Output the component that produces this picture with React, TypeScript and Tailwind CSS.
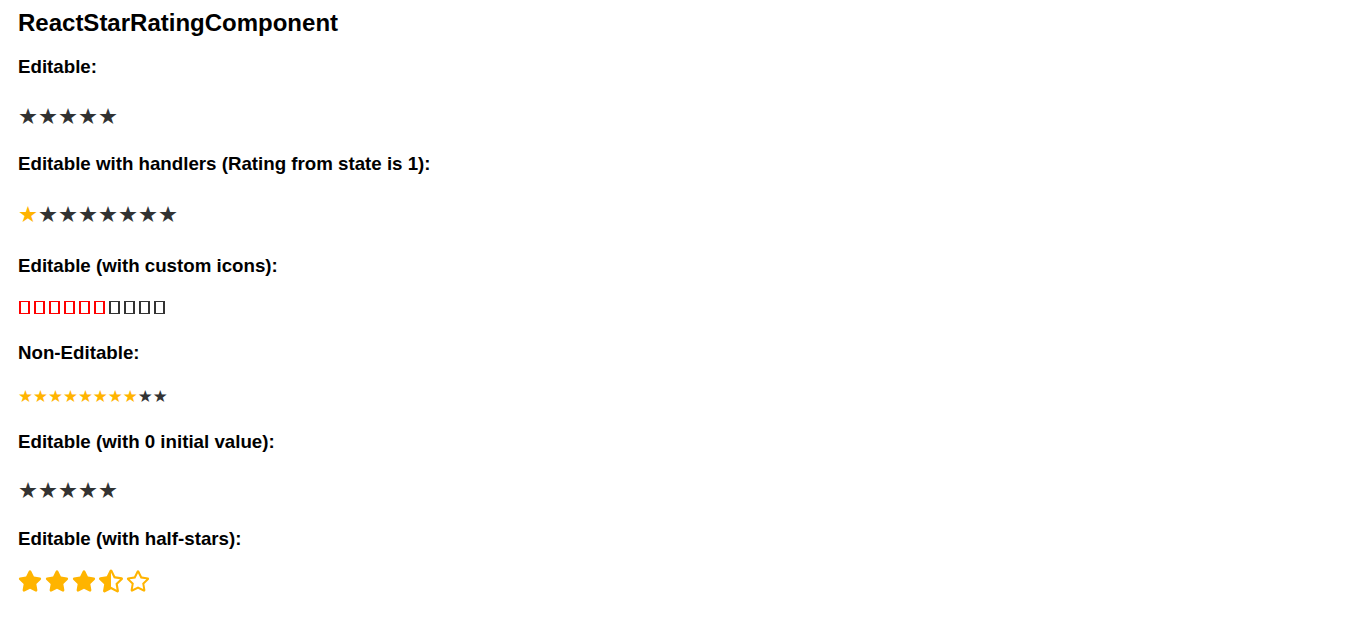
import { FaStar, FaStarHalfAlt, FaRegStar } from "react-icons/fa";

const ARIAL = "font-['Liberation_Sans',Arial,sans-serif]";

function Label({ children, className }: { children: string; className?: string }) {
  return (
    <h3 className={`flex h-[22px] items-center text-[18.72px] font-bold leading-[22px] text-black ${className ?? ""}`}>
      {children}
    </h3>
  );
}

function TextStars({ count, value, className }: { count: number; value: number; className?: string }) {
  return (
    <div className={`flex h-6 items-center font-['DejaVu_Sans',sans-serif] ${className ?? ""}`}>
      {Array.from({ length: count }).map((_, i) => (
        <span key={i} className={i < value ? "text-[#ffb400]" : "text-[#333333]"}>
          ★
        </span>
      ))}
    </div>
  );
}

// custom icons failed to load in the original, so they show as empty boxes
function TofuRow() {
  return (
    <div className="mt-[18px] ml-px flex h-6 items-center gap-1">
      {Array.from({ length: 10 }).map((_, i) => (
        <span
          key={i}
          className={`inline-block h-[13px] w-[11px] border-x-2 border-y ${
            i < 6 ? "border-[#ff0000]" : "border-[#333333]"
          }`}
        />
      ))}
    </div>
  );
}

function HalfStars() {
  return (
    <div className="mt-[19px] flex h-6 items-center gap-[3px] text-[#ffb400]">
      <FaStar size={24} />
      <FaStar size={24} />
      <FaStar size={24} />
      <FaStarHalfAlt size={24} />
      <FaRegStar size={24} />
    </div>
  );
}

export default function App() {
  return (
    <div className={`min-h-screen bg-white pl-[18px] ${ARIAL}`}>
      <h2 className="pt-[9px] text-[24px] font-bold leading-[28px] text-black">ReactStarRatingComponent</h2>

      <Label className="mt-[19px]">Editable:</Label>
      <TextStars count={5} value={0} className="mt-[27px] text-[22.3px]" />

      <Label className="mt-[24px]">Editable with handlers (Rating from state is 1):</Label>
      <TextStars count={8} value={1} className="mt-[28px] text-[22.3px]" />

      <Label className="mt-[28px]">Editable (with custom icons):</Label>
      <TofuRow />

      <Label className="mt-[23px]">Non-Editable:</Label>
      <TextStars count={10} value={8} className="mt-[21px] text-[16.7px]" />

      <Label className="mt-[22px]">Editable (with 0 initial value):</Label>
      <TextStars count={5} value={0} className="mt-[26px] text-[22.3px]" />

      <Label className="mt-[25px]">Editable (with half-stars):</Label>
      <HalfStars />
    </div>
  );
}
